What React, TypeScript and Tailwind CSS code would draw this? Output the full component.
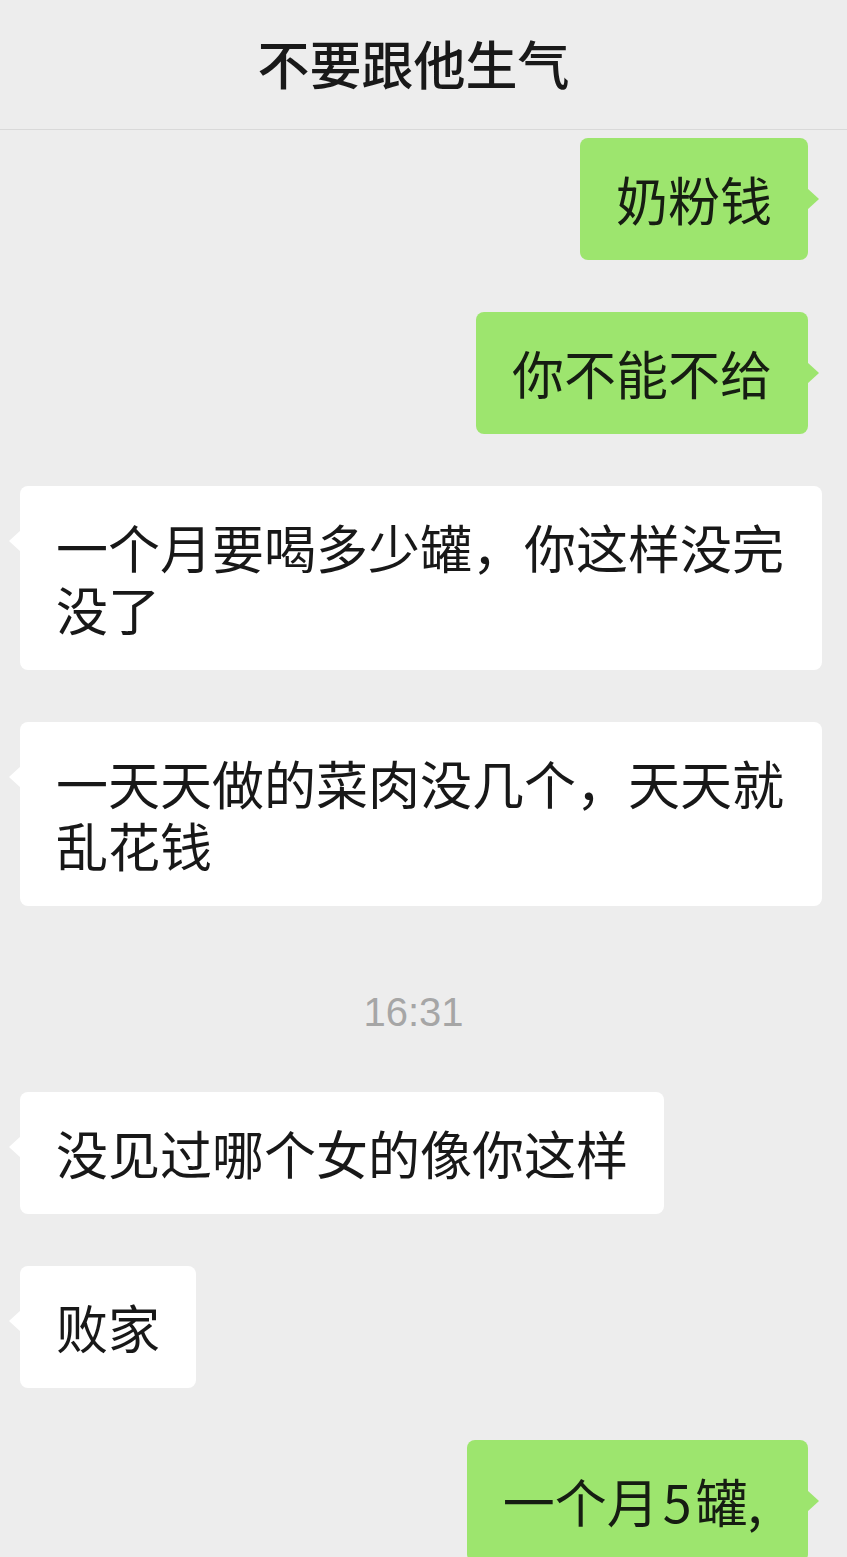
import type { ReactNode } from 'react';

type Side = 'left' | 'right';

function Bubble({ side, children }: { side: Side; children: ReactNode }) {
  const mine = side === 'right';
  return (
    <div className={mine ? 'flex justify-end pr-[39px]' : 'flex justify-start pl-[20px]'}>
      <div
        className={
          mine
            ? 'relative max-w-[802px] rounded-[8px] bg-[#9de56e] px-[36px] py-[30px] text-[52px] leading-[62px] text-[#161d12]'
            : 'relative max-w-[802px] rounded-[8px] bg-white px-[36px] py-[30px] text-[52px] leading-[62px] text-[#181818]'
        }
      >
        {mine ? (
          <span className="absolute right-[-11px] top-[50px] h-0 w-0 border-y-[11px] border-l-[12px] border-y-transparent border-l-[#9de56e]" />
        ) : (
          <span className="absolute left-[-11px] top-[44px] h-0 w-0 border-y-[11px] border-r-[12px] border-y-transparent border-r-white" />
        )}
        {children}
      </div>
    </div>
  );
}

export default function App() {
  return (
    <div className="h-[1557px] w-[847px] overflow-hidden bg-[#ededed] font-['Noto_Sans_CJK_SC','Noto_Sans',sans-serif]">
      <header className="flex h-[130px] items-center justify-center border-b border-[#d9d9d9] bg-[#ededed] pb-[4px] pr-[20px]">
        <h1 className="text-[52px] font-medium leading-none text-[#191919]">不要跟他生气</h1>
      </header>

      <main className="flex flex-col pt-[8px]">
        <Bubble side="right">奶粉钱</Bubble>
        <div className="mt-[52px]">
          <Bubble side="right">你不能不给</Bubble>
        </div>
        <div className="mt-[52px]">
          <Bubble side="left">一个月要喝多少罐，你这样没完没了</Bubble>
        </div>
        <div className="mt-[52px]">
          <Bubble side="left">一天天做的菜肉没几个，天天就乱花钱</Bubble>
        </div>

        <div className="mt-[80px] flex h-[52px] items-center justify-center pr-[20px] font-['Liberation_Sans',sans-serif] text-[40px] text-[#a6a6a6]">
          16:31
        </div>

        <div className="mt-[54px]">
          <Bubble side="left">没见过哪个女的像你这样</Bubble>
        </div>
        <div className="mt-[52px]">
          <Bubble side="left">败家</Bubble>
        </div>
        <div className="mt-[52px]">
          <Bubble side="right">
            一个月<span className="mx-[4px]">5</span>罐,
            <span className="inline-block w-[10px]" />
          </Bubble>
        </div>
      </main>
    </div>
  );
}
